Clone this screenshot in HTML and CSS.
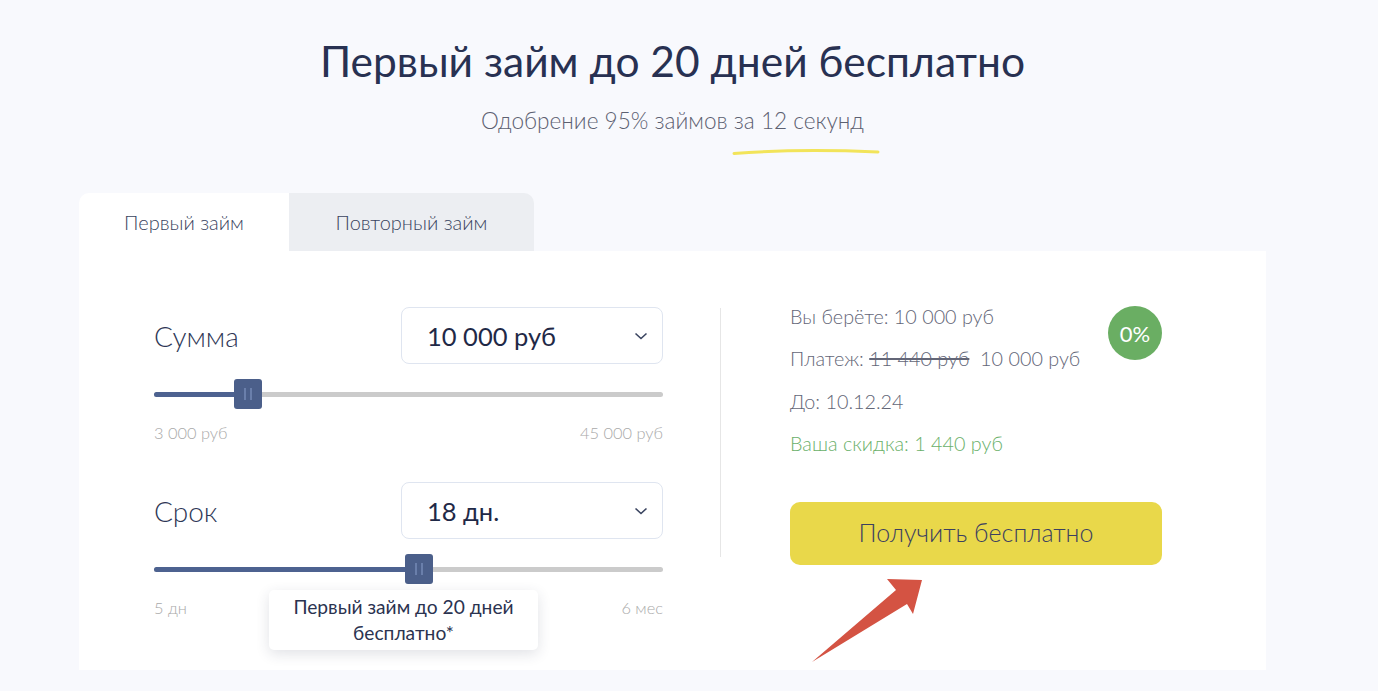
FILE: index.html
```html
<html>
<head>
  <title>Первый займ</title>
  <link rel="stylesheet" href="styles.css">
</head>
<body>
  <div class="page">
    <h1 class="title">Первый займ до 20 дней бесплатно</h1>
    <div class="subtitle">
      Одобрение 95% займов за 12 секунд
      <svg class="swoosh" width="150" height="8" viewBox="0 0 150 8">
        <path d="M2 5.5 C40 2.5 90 1.5 146 4" stroke="#f2e45a" stroke-width="3" fill="none" stroke-linecap="round"/>
      </svg>
    </div>

    <div class="tabs">
      <div class="tab active">Первый займ</div>
      <div class="tab">Повторный займ</div>
    </div>

    <div class="card">
      <div class="calc">
        <div class="field">
          <div class="field-head">
            <div class="field-label">Сумма</div>
            <div class="select">
              <span>10 000 руб</span>
              <svg width="14" height="8" viewBox="0 0 14 8"><path d="M1.5 1.5 L7 6.5 L12.5 1.5" stroke="#3a4460" stroke-width="1.6" fill="none"/></svg>
            </div>
          </div>
          <div class="slider">
            <div class="track"><div class="fill" style="width: 94px"></div></div>
            <div class="thumb" style="left: 80px"><i></i><i></i></div>
          </div>
          <div class="limits"><span>3 000 руб</span><span>45 000 руб</span></div>
        </div>

        <div class="field">
          <div class="field-head">
            <div class="field-label">Срок</div>
            <div class="select">
              <span>18 дн.</span>
              <svg width="14" height="8" viewBox="0 0 14 8"><path d="M1.5 1.5 L7 6.5 L12.5 1.5" stroke="#3a4460" stroke-width="1.6" fill="none"/></svg>
            </div>
          </div>
          <div class="slider">
            <div class="track"><div class="fill" style="width: 264px"></div></div>
            <div class="thumb" style="left: 251px"><i></i><i></i></div>
            <div class="tooltip">Первый займ до 20 дней бесплатно*</div>
          </div>
          <div class="limits"><span>5 дн</span><span>6 мес</span></div>
        </div>
      </div>

      <div class="divider"></div>

      <div class="summary">
        <div class="summary-top">
          <div class="lines">
            <p>Вы берёте: 10 000 руб</p>
            <p>Платеж: <s>11 440 руб</s>&nbsp; 10 000 руб</p>
            <p>До: 10.12.24</p>
            <p class="discount">Ваша скидка: 1 440 руб</p>
          </div>
          <div class="badge">0%</div>
        </div>
        <button class="cta">Получить бесплатно</button>
      </div>

      <svg class="arrow" width="120" height="90" viewBox="0 0 120 90">
        <polygon points="2,85 86,13 77,2 112,3 103,37 97,27" fill="#d45343"/>
      </svg>
    </div>
  </div>
</body>
</html>
```

FILE: styles.css
```css
body {
  margin: 0;
  background-color: #f8f9fd;
  font-family: Lato, 'Noto Sans', sans-serif;
  font-weight: 300;
  color: #2b3350;
}

.page {
  width: 1187px;
  margin-left: 79px;
}

.title {
  margin: 0;
  padding-top: 36px;
  text-align: center;
  font-size: 42.5px;
  font-weight: 400;
  line-height: 50px;
  color: #283152;
}

.subtitle {
  position: relative;
  width: 420px;
  margin: 20px auto 0;
  text-align: center;
  font-size: 22.6px;
  line-height: 30px;
  color: #5c6071;
}

.swoosh {
  position: absolute;
  left: 269px;
  top: 42px;
}

.tabs {
  display: flex;
  margin-top: 57px;
}

.tab {
  height: 58px;
  display: flex;
  align-items: center;
  justify-content: center;
  font-size: 20px;
  color: #3a4460;
  background-color: #eceef2;
}

.tab.active {
  width: 210px;
  background-color: #ffffff;
  border-top-left-radius: 10px;
}

.tab:not(.active) {
  width: 245px;
  border-top-right-radius: 10px;
}

.card {
  position: relative;
  display: flex;
  height: 419px;
  background-color: #ffffff;
  padding: 56px 0 0 75px;
  box-sizing: border-box;
}

.calc {
  width: 509px;
  display: flex;
  flex-direction: column;
  gap: 40px;
}

.field-head {
  display: flex;
  justify-content: space-between;
  align-items: center;
}

.field-label {
  font-size: 28px;
  color: #2e3756;
}

.select {
  width: 262px;
  height: 57px;
  box-sizing: border-box;
  border: 1px solid #dfe5f0;
  border-radius: 8px;
  display: flex;
  align-items: center;
  justify-content: space-between;
  padding: 0 14px 0 25px;
  font-size: 25.5px;
  font-weight: 400;
  color: #1f2947;
}

.slider {
  position: relative;
  height: 30px;
  margin-top: 15px;
}

.track {
  position: absolute;
  left: 0;
  right: 0;
  top: 13px;
  height: 5px;
  border-radius: 3px;
  background-color: #cbcbcb;
}

.fill {
  height: 100%;
  border-radius: 3px;
  background-color: #4d6290;
}

.thumb {
  position: absolute;
  top: 0;
  width: 28px;
  height: 30px;
  border-radius: 3px;
  background-color: #4b5f8a;
  display: flex;
  justify-content: center;
  align-items: center;
  gap: 4px;
}

.thumb i {
  width: 2px;
  height: 12px;
  background-color: #6a7fab;
}

.tooltip {
  position: absolute;
  left: 115px;
  top: 36px;
  width: 269px;
  padding: 4px 8px;
  box-sizing: border-box;
  background-color: #ffffff;
  border-radius: 5px;
  box-shadow: 0 4px 14px rgba(40, 50, 80, 0.14);
  text-align: center;
  font-size: 19.2px;
  line-height: 26px;
  font-weight: 400;
  color: #2b3350;
  z-index: 2;
}

.limits {
  display: flex;
  justify-content: space-between;
  margin-top: 14px;
  font-size: 16.4px;
  color: #a9a9a9;
}

.divider {
  width: 1px;
  height: 249px;
  margin: 1px 69px 0 57px;
  background-color: #e6e6e6;
}

.summary {
  width: 372px;
  display: flex;
  flex-direction: column;
}

.summary-top {
  display: flex;
  justify-content: space-between;
}

.lines {
  margin-top: -2px;
}

.lines p {
  margin: 0 0 20px;
  font-size: 19.8px;
  line-height: 22.3px;
  color: #636677;
}

.lines s {
  text-decoration-thickness: 2px;
  color: #636677;
}

.lines .discount {
  color: #6ab06a;
}

.badge {
  width: 54px;
  height: 54px;
  margin-top: -1px;
  border-radius: 50%;
  background-color: #6aae63;
  color: #ffffff;
  font-size: 22px;
  font-weight: 400;
  display: flex;
  align-items: center;
  justify-content: center;
}

.cta {
  margin-top: 28px;
  height: 63px;
  padding-bottom: 5px;
  border: none;
  border-radius: 10px;
  background-color: #e9d84a;
  font-family: inherit;
  font-weight: 300;
  font-size: 25px;
  color: #3c4060;
  cursor: pointer;
}

.arrow {
  position: absolute;
  left: 731px;
  top: 326px;
}
```
